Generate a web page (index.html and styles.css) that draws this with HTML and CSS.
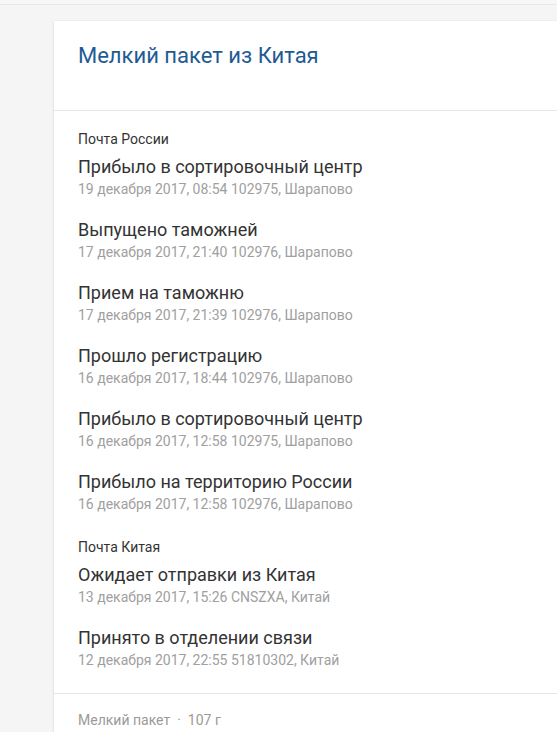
FILE: index.html
```html
<!DOCTYPE html>
<html lang="ru">
<head>
<meta charset="utf-8">
<link rel="stylesheet" href="styles.css">
</head>
<body>
<div class="topbar"></div>
<div class="page">
  <div class="card">
    <div class="card-header">
      <h1 class="title">Мелкий пакет из Китая</h1>
    </div>
    <div class="card-body">
      <div class="group">
        <div class="group-label">Почта России</div>
        <div class="event">
          <div class="event-title">Прибыло в сортировочный центр</div>
          <div class="event-meta">19 декабря 2017, 08:54 102975, Шарапово</div>
        </div>
        <div class="event">
          <div class="event-title">Выпущено таможней</div>
          <div class="event-meta">17 декабря 2017, 21:40 102976, Шарапово</div>
        </div>
        <div class="event">
          <div class="event-title">Прием на таможню</div>
          <div class="event-meta">17 декабря 2017, 21:39 102976, Шарапово</div>
        </div>
        <div class="event">
          <div class="event-title">Прошло регистрацию</div>
          <div class="event-meta">16 декабря 2017, 18:44 102976, Шарапово</div>
        </div>
        <div class="event">
          <div class="event-title">Прибыло в сортировочный центр</div>
          <div class="event-meta">16 декабря 2017, 12:58 102975, Шарапово</div>
        </div>
        <div class="event">
          <div class="event-title">Прибыло на территорию России</div>
          <div class="event-meta">16 декабря 2017, 12:58 102976, Шарапово</div>
        </div>
      </div>
      <div class="group">
        <div class="group-label">Почта Китая</div>
        <div class="event">
          <div class="event-title">Ожидает отправки из Китая</div>
          <div class="event-meta">13 декабря 2017, 15:26 CNSZXA, Китай</div>
        </div>
        <div class="event">
          <div class="event-title">Принято в отделении связи</div>
          <div class="event-meta">12 декабря 2017, 22:55 51810302, Китай</div>
        </div>
      </div>
    </div>
    <div class="card-footer">
      <span>Мелкий пакет</span><span class="dot">·</span><span>107 г</span>
    </div>
  </div>
</div>
</body>
</html>
```
FILE: styles.css
```css
html, body {
  margin: 0;
  padding: 0;
  background: #f5f5f5;
  font-family: Roboto, "Noto Sans", Arial, sans-serif;
  overflow: hidden;
}
.topbar {
  height: 4px;
  border-bottom: 1px solid #e8e8e8;
  background: #f7f7f7;
}
.page {
  padding: 16px 0 0 54px;
}
.card {
  background: #fff;
  width: 520px;
  box-shadow: -1px 0 2px rgba(0,0,0,0.06), 0 0 1px rgba(0,0,0,0.08);
}
.card-header {
  height: 90px;
  box-sizing: border-box;
  padding: 21px 24px 0;
  border-bottom: 1px solid #e6e6e6;
}
.title {
  margin: 0;
  font-size: 22px;
  line-height: 28px;
  font-weight: 400;
  color: #1f5b93;
}
.card-body {
  padding: 20px 24px 23px;
  border-bottom: 1px solid #e6e6e6;
}
.group + .group {
  margin-top: 25px;
}
.group-label {
  font-size: 14px;
  line-height: 16px;
  color: #333;
  margin-bottom: 8px;
}
.event + .event {
  margin-top: 19px;
}
.event-title {
  font-size: 18px;
  line-height: 24px;
  color: #333;
}
.event-meta {
  font-size: 14px;
  line-height: 20px;
  color: #a0a0a0;
}
.card-footer {
  padding: 18px 24px 20px;
  font-size: 14px;
  line-height: 16px;
  color: #9a9a9a;
}
.dot {
  margin: 0 7px;
}
```
